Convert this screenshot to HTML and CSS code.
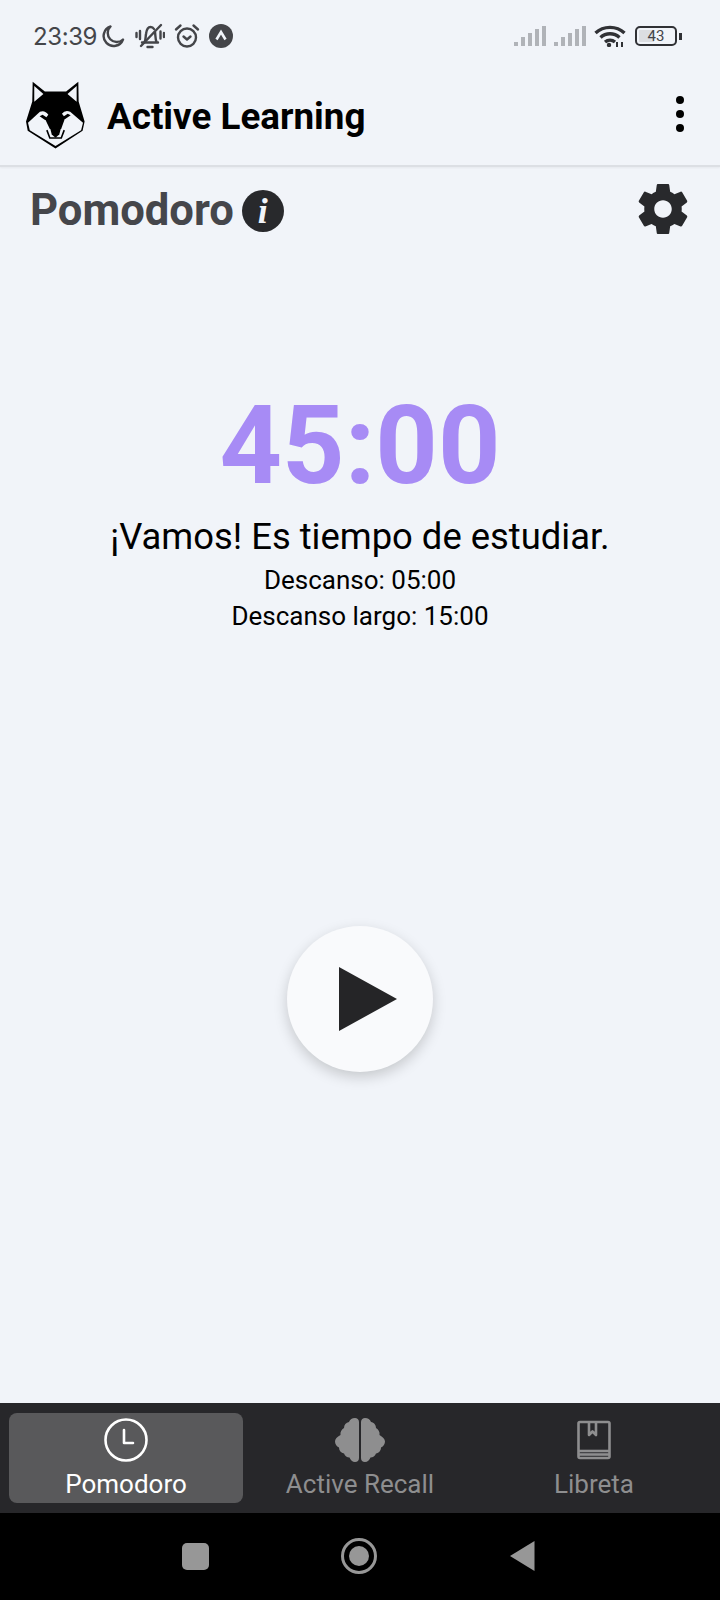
FILE: index.html
```html
<!DOCTYPE html>
<html lang="es">
<head>
<meta charset="utf-8">
<title>Active Learning</title>
<link rel="stylesheet" href="styles.css">
</head>
<body>
<div class="screen">
  <div class="status">
    <div class="status-left">
      <span class="clock">23:39</span>
      <svg class="si-moon" viewBox="0 0 24 24"><path d="M9.500 2.500A10 10 0 1 0 22 15.500 9 9 0 0 1 9.500 2.500Z" fill="none" stroke="#444549" stroke-width="2.400" stroke-linejoin="round"/></svg>
      <svg class="si-bell" viewBox="0 0 30 26"><g fill="none" stroke="#444549" stroke-width="2.400" stroke-linecap="round"><path d="M7 19.500h16M9.500 19c1.300-2 1-5 1.500-8C11.600 6.500 13 4 15.500 4c1.500 0 2.700.6 3.500 2M20 9c.5 3 .3 7.500 1.500 10"/><path d="M12.500 24h5"/><path d="M6 23 26 2"/><path d="M1.500 10v4M5 8v8M25.500 8.500v7M29 10v4"/></g></svg>
      <svg class="si-alarm" viewBox="0 0 26 26"><g fill="none" stroke="#444549" stroke-width="2.400" stroke-linecap="round" stroke-linejoin="round"><circle cx="13" cy="14.500" r="9"/><path d="M2 6.500 6.500 2.500M24 6.500 19.500 2.500"/><path d="M9.500 13.500 13 16.500l3.500-3"/></g></svg>
      <svg class="si-a" viewBox="0 0 24 24"><circle cx="12" cy="12" r="12" fill="#444549"/><path d="M7.500 15.500 12 8l4.500 7.500" fill="none" stroke="#f1f4f9" stroke-width="2.600"/></svg>
    </div>
    <div class="status-right">
      <svg class="si-signal" viewBox="0 0 32 20"><g fill="#b0b3b8"><rect x="0" y="16" width="4" height="4"/><rect x="7" y="11" width="4" height="9"/><rect x="14" y="7" width="4" height="13"/><rect x="21" y="3" width="4" height="17"/><rect x="28" y="0" width="4" height="20"/></g></svg>
      <svg class="si-signal" viewBox="0 0 32 20"><g fill="#b0b3b8"><rect x="0" y="16" width="4" height="4"/><rect x="7" y="11" width="4" height="9"/><rect x="14" y="7" width="4" height="13"/><rect x="21" y="3" width="4" height="17"/><rect x="28" y="0" width="4" height="20"/></g></svg>
      <svg class="si-wifi" viewBox="0 0 32 22"><g fill="none" stroke="#303135" stroke-width="3.400"><path d="M1.500 8C9.500 0.500 22.500 0.500 30.500 8"/><path d="M6.500 12.500C12 7.500 20 7.500 25.500 12.500"/><path d="M11 17c3-2.500 7-2.500 10 0"/></g><circle cx="15" cy="20" r="2.200" fill="#303135"/><path d="M23 22v-5M28 22v-5" stroke="#303135" stroke-width="2"/></svg>
      <div class="battery">
        <div class="battery-body"><span class="battery-fill"></span><span class="battery-num">43</span></div>
        <span class="battery-cap"></span>
      </div>
    </div>
  </div>

  <header class="appbar">
    <svg class="wolf" viewBox="0 0 59.400 68.500">
      <path d="M6.700 .7 19 10.700h21.400L52.700 .7 53 20.700l6 20-2 9.300L29.700 68 1.700 50 0 40.700l6.300-20Z" fill="#000"/>
      <path d="M8.300 5 17.500 13 8.300 21ZM51 5 41.800 13 51 21Z" fill="#f1f4f9"/>
      <path d="M2 42 14 31q5-2 8.500 3l-2 2.500-3.800-2.500-3 1.500 5.500 3.700h.5L24 48.300h11.400L39 38.200h.5l5.500-3.700-3-1.500-3.800 2.500-2-2.500Q39.200 29 44.500 31L57.400 42l-1.900 7.500L29.700 65.500 3.800 49.500Z" fill="#f1f4f9"/>
      <path d="M21 49.500 24 57.500H35.500L38.500 49.500" fill="none" stroke="#000" stroke-width="1.600"/>
      <path d="M24.500 48h10.500l-1.500 6-3.500 3h-.6l-3.500-3Z" fill="#000"/>
    </svg>
    <h1 class="appname">Active Learning</h1>
    <div class="kebab"><span></span><span></span><span></span></div>
  </header>

  <main class="main">
    <div class="titlebar">
      <div class="title-left">
        <h2 class="title">Pomodoro</h2>
        <span class="info">i</span>
      </div>
      <svg class="gear" viewBox="0 0 24 24"><path fill="#28292c" d="M19.430 12.980c.04-.320.070-.640.070-.980s-.030-.660-.070-.980l2.110-1.650c.190-.150.240-.420.120-.640l-2-3.460c-.120-.220-.390-.300-.610-.220l-2.490 1c-.520-.400-1.080-.730-1.690-.980l-.380-2.650C14.460 2.180 14.250 2 14 2h-4c-.250 0-.460.180-.490.420l-.380 2.650c-.610.250-1.170.590-1.690.980l-2.490-1c-.230-.090-.490 0-.610.220l-2 3.460c-.130.220-.070.490.120.640l2.110 1.650c-.040.320-.070.650-.070.980s.030.660.070.980l-2.110 1.650c-.190.150-.240.420-.120.640l2 3.460c.120.220.390.300.610.220l2.490-1c.520.400 1.080.730 1.690.980l.380 2.650c.030.240.240.420.490.420h4c.250 0 .460-.180.490-.420l.380-2.650c.610-.250 1.170-.590 1.690-.980l2.490 1c.230.090.490 0 .610-.220l2-3.460c.120-.220.070-.490-.120-.640l-2.110-1.650ZM12 15.500c-1.930 0-3.500-1.570-3.500-3.500s1.570-3.500 3.500-3.500 3.500 1.570 3.500 3.500-1.570 3.500-3.500 3.500Z"/></svg>
    </div>
    <div class="timer-block">
      <div class="timer">45:00</div>
      <p class="message">¡Vamos! Es tiempo de estudiar.</p>
      <p class="sub">Descanso: 05:00</p>
      <p class="sub">Descanso largo: 15:00</p>
    </div>
    <button class="play" type="button" aria-label="Iniciar">
      <svg viewBox="0 0 58 64"><path d="M0 0 58 32 0 64Z" fill="#252527"/></svg>
    </button>
  </main>

  <nav class="tabs">
    <div class="tab active">
      <svg class="tab-icon" viewBox="0 0 44 44"><circle cx="22" cy="22" r="20.500" fill="none" stroke="#fff" stroke-width="2.600"/><path d="M20 12v13h9" fill="none" stroke="#fff" stroke-width="2.600" stroke-linecap="round" stroke-linejoin="round"/></svg>
      <span class="tab-label">Pomodoro</span>
    </div>
    <div class="tab">
      <svg class="tab-icon" viewBox="0 0 50 44"><path fill="#8e8e8f" d="M24 4c0-2.500-2-4-4-4-3 0-5 1.500-6 4-3 .5-5 3-5 6-2.500 1.500-4 4-3.500 7C2 19 0 21 0 23.500s1.500 5 4 6c0 3 2 5.500 5 6 1 2.500 3 4 5.500 4 1 2.500 3 4.500 5.500 4.500s4-1.500 4-4ZM26 4c0-2.500 2-4 4-4 3 0 5 1.500 6 4 3 .5 5 3 5 6 2.500 1.500 4 4 3.500 7 3 2 5.500 4 5.500 6.500s-1.500 5-4 6c0 3-2 5.500-5 6-1 2.500-3 4-5.500 4-1 2.500-3 4.500-5.500 4.500s-4-1.500-4-4Z"/></svg>
      <span class="tab-label">Active Recall</span>
    </div>
    <div class="tab">
      <svg class="tab-icon" viewBox="0 0 44 44"><g fill="none" stroke="#8e8e8f" stroke-width="2.600" stroke-linejoin="round"><rect x="6.500" y="4" width="31" height="36" rx="1.500"/><path d="M6.500 33h31"/><path d="M6.500 36.500h31"/><path d="M17 4v13l3.500-3.500 3.500 3.500V4"/></g></svg>
      <span class="tab-label">Libreta</span>
    </div>
  </nav>

  <div class="sysnav">
    <span class="sys-square"></span>
    <svg class="sys-circle" viewBox="0 0 36 36"><circle cx="18" cy="18" r="16.500" fill="none" stroke="#979797" stroke-width="3"/><circle cx="18" cy="18" r="10" fill="#979797"/></svg>
    <svg class="sys-back" viewBox="0 0 26 32"><path d="M25.500 1V31L1 16Z" fill="#979797"/></svg>
  </div>
</div>
</body>
</html>
```
FILE: styles.css
```css
* { box-sizing: border-box; }
html, body { margin: 0; padding: 0; }
body { font-family: Roboto, "Liberation Sans", sans-serif; background: #f1f4f9; }
.screen { width: 720px; height: 1600px; display: flex; flex-direction: column; background: #f1f4f9; overflow: hidden; }

.status { height: 70px; flex: none; display: flex; align-items: center; justify-content: space-between; padding: 2px 38px 0 33px; }
.status-left { display: flex; align-items: center; }
.status-right { display: flex; align-items: center; }
.clock { font-size: 24px; color: #444549; font-family: Inter, Roboto, sans-serif; width: 62px; letter-spacing: -0.4px; }
.si-moon { width: 24px; height: 24px; margin-left: 6px; }
.si-bell { width: 30px; height: 26px; margin-left: 10px; }
.si-alarm { width: 26px; height: 26px; margin-left: 9px; }
.si-a { width: 24px; height: 24px; margin-left: 9px; }
.si-signal { width: 32px; height: 20px; margin-right: 8px; }
.si-wifi { width: 32px; height: 22px; }
.battery { display: flex; align-items: center; margin-left: 9px; }
.battery-body { width: 42px; height: 20px; border: 2px solid #303135; border-radius: 5px; position: relative; display: flex; align-items: center; justify-content: center; padding: 2px; }
.battery-fill { position: absolute; left: 2px; top: 2px; bottom: 2px; width: 15px; background: #dcdee2; }
.battery-num { position: relative; font-size: 15px; color: #444549; font-family: Roboto, sans-serif; }
.battery-cap { width: 3px; height: 7px; background: #303135; margin-left: 2px; }

.appbar { height: 97px; flex: none; display: flex; align-items: center; padding: 0 24px 0 26px; border-bottom: 2px solid #dcdfe4; background: #f1f4f9; box-shadow: 0 1px 2px rgba(0,0,0,0.05); }
.wolf { width: 59px; height: 68px; flex: none; margin-bottom: 5px; }
.appname { margin: 0 0 3px 22px; font-size: 36.8px; font-weight: 700; color: #000; flex: 1; }
.kebab { display: flex; flex-direction: column; gap: 6px; width: 10px; margin: 0 10px 8px 0; }
.kebab span { width: 8px; height: 8px; border-radius: 50%; background: #000; }

.main { flex: 1; display: flex; flex-direction: column; align-items: center; min-height: 0; }
.titlebar { width: 100%; display: flex; align-items: center; justify-content: space-between; padding: 12px 31px 0 30px; }
.title-left { display: flex; align-items: center; gap: 8px; margin-top: 4px; }
.title { margin: 0; font-size: 43.6px; font-weight: 700; color: #45464b; line-height: 50px; }
.info { width: 42px; height: 42px; border-radius: 50%; background: #28292c; color: #f1f4f9; display: flex; align-items: center; justify-content: center; font-family: "Liberation Serif", serif; font-style: italic; font-weight: 700; font-size: 36px; }
.gear { width: 60px; height: 60px; margin-right: -4px; }

.timer-block { margin-top: 144px; text-align: center; color: #000; }
.timer { font-size: 109px; font-weight: 700; color: #a78bf5; line-height: 126px; }
.message { margin: 6px 0 3px; font-size: 36.4px; line-height: 44px; }
.sub { margin: 0; font-size: 26px; line-height: 36px; }
.play { width: 146px; height: 146px; border: 0; border-radius: 50%; background: #f9fafc; margin-top: 292px; padding: 0 0 0 16px; display: flex; align-items: center; justify-content: center; box-shadow: 0 5px 14px rgba(0,0,0,0.18); }
.play svg { width: 58px; height: 64px; }

.tabs { height: 110px; flex: none; background: #27272a; display: flex; padding: 10px 9px; gap: 0; }
.tab { flex: 1; display: flex; flex-direction: column; align-items: center; border-radius: 8px; padding-top: 5px; }
.tab.active { background: #59595b; }
.tab-icon { width: 50px; height: 44px; }
.tab-label { font-size: 26px; line-height: 30px; color: #8e8e8f; margin-top: 7px; }
.tab.active .tab-label { color: #fff; }

.sysnav { height: 87px; flex: none; background: #000; display: flex; align-items: center; justify-content: center; padding: 0 3px 1px 0; gap: 132px; }
.sys-square { width: 27px; height: 27px; border-radius: 5px; background: #979797; }
.sys-circle { width: 36px; height: 36px; }
.sys-back { width: 26px; height: 32px; }
```
